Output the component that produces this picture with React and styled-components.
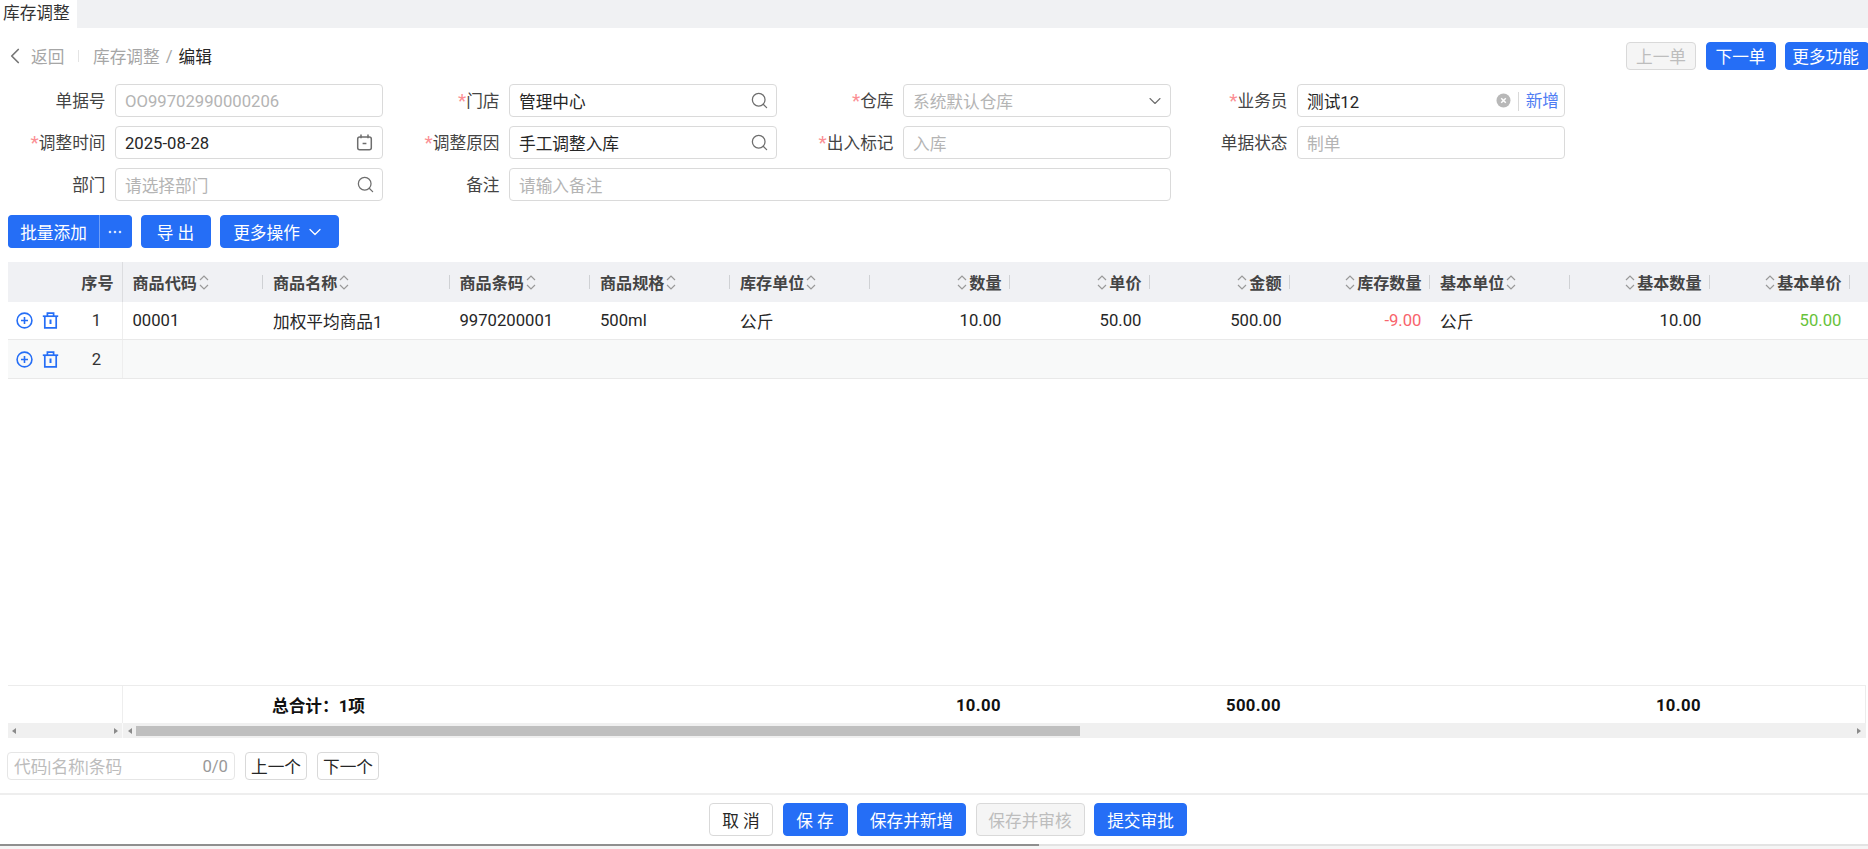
import React from 'react'
import styled, { createGlobalStyle } from 'styled-components'
import { ChevronLeft, ChevronDown, Search } from 'lucide-react'

const BLUE = '#256ef6'
const FONT_SIZE = '16.68px'
const COLS = '115px 140.5px 186.5px 140.5px repeat(9, 140px) 1fr'

const GlobalStyle = createGlobalStyle`
  html, body { margin: 0; padding: 0; background: #fff; }
  body {
    font-family: Roboto, "Noto Sans CJK SC", sans-serif;
    font-size: ${FONT_SIZE};
    color: #262626;
  }
  * { box-sizing: border-box; }
`

const Page = styled.div`
  height: 100vh;
  display: flex;
  flex-direction: column;
  overflow: hidden;
`

const TabBar = styled.div`
  height: 28px;
  flex: none;
  display: flex;
  background: #f0f1f3;
`

const Tab = styled.div`
  width: 77px;
  padding-left: 3px;
  background: #fff;
  line-height: 27px;
  color: #333;
`

const TopRow = styled.div`
  height: 28px;
  margin-top: 14px;
  padding-left: 12px;
  flex: none;
  display: flex;
  align-items: center;
`

const Back = styled.span`
  display: flex;
  align-items: center;
  width: 65.5px;
  color: #a6a6a6;
  svg { margin-left: -10px; margin-right: 3px; color: #777; }
`

const VLine = styled.span`
  width: 1px;
  height: 12px;
  background: #e4e4e4;
`

const Crumb = styled.span`
  margin-left: ${p => p.$first ? '14.5px' : '0'};
  color: ${p => p.$current ? '#262626' : '#a6a6a6'};
`

const Slash = styled.span`
  margin: 0 6px 0 6px;
  color: #a6a6a6;
`

const TopActions = styled.div`
  margin-left: auto;
  margin-right: -1px;
  display: flex;
  gap: 9.5px;
`

const Button = styled.button`
  height: ${p => p.$h || 33}px;
  width: ${p => p.$w ? p.$w + 'px' : 'auto'};
  padding: 0 ${p => p.$pr || 0}px 0 0;
  flex: none;
  border-radius: 4px;
  border: 1px solid ${p => p.$kind === 'primary' ? BLUE : '#d9d9d9'};
  background: ${p => p.$kind === 'primary' ? BLUE : p.$kind === 'disabled' ? '#f5f5f5' : '#fff'};
  color: ${p => p.$kind === 'primary' ? '#fff' : p.$kind === 'disabled' ? '#bdbdbd' : '#262626'};
  font: inherit;
  display: inline-flex;
  align-items: center;
  justify-content: center;
  gap: ${p => p.$gap || 8}px;
`

const Form = styled.div`
  margin-top: 14px;
  flex: none;
  display: grid;
  grid-template-columns: 383px 394px 394px 394px;
  grid-auto-rows: 33px;
  row-gap: 9px;
`

const Item = styled.div`
  display: flex;
  grid-column: span ${p => p.$span || 1};
`

const Label = styled.label`
  flex: 1;
  padding-right: 9.5px;
  text-align: right;
  line-height: 35px;
  color: #444;
  white-space: nowrap;
  i { font-style: normal; font-size: 19px; line-height: 0; color: #fb8f94; }
`

const Field = styled.div`
  flex: 0 0 ${p => p.$w || 268}px;
  height: 33px;
  padding: 0 9px;
  display: flex;
  align-items: center;
  background: #fff;
  border: 1px solid #dadada;
  border-radius: 4px;
  svg { flex: none; color: #6e6e6e; }
`

const Value = styled.span`
  flex: 1;
  padding-top: 1px;
  white-space: nowrap;
  color: ${p => p.$muted ? '#b4b4b4' : '#262626'};
`

const FieldIcon = styled.span`
  display: flex;
  margin-right: ${p => p.$shift || 0}px;
`

const AddLink = styled.span`
  margin-left: 7px;
  margin-top: 2px;
  padding-left: 7px;
  margin-right: -4px;
  border-left: 1px solid #d9d9d9;
  line-height: 19px;
  color: #4f7df3;
`

const Toolbar = styled.div`
  margin-top: 14px;
  padding-left: 7.5px;
  flex: none;
  display: flex;
  gap: 9px;
`

const Split = styled.div`
  display: flex;
  button:first-child { border-radius: 4px 0 0 4px; border-right-color: #6f9ff8; }
  button:last-child { border-radius: 0 4px 4px 0; border-left: none; }
`

const Table = styled.div`
  margin: 14px 0 0 7.5px;
  flex: 1;
  min-height: 0;
  display: flex;
  flex-direction: column;
`

const Row = styled.div`
  display: grid;
  grid-template-columns: ${COLS};
  height: ${p => p.$h}px;
  flex: none;
  background: ${p => p.$soft ? '#f8f9f9' : '#fff'};
  border-bottom: 1px solid #e9e9e9;
`

const HeadRow = styled(Row)`
  background: #f0f1f4;
  border-bottom: none;
`

const Head = styled.div`
  position: relative;
  padding: 0 ${p => p.$right ? '8.5px' : '0'} 0 ${p => p.$right ? '0' : '10px'};
  display: flex;
  align-items: center;
  justify-content: ${p => p.$right ? 'flex-end' : 'flex-start'};
  gap: 2px;
  font-size: 16.1px;
  font-weight: 600;
  color: #444;
  white-space: nowrap;
  &::after {
    content: '';
    position: absolute;
    right: 0;
    top: 13px;
    height: 14px;
    width: 1px;
    background: #cfd1d4;
  }
`

const SeqHead = styled.div`
  padding-right: 8px;
  display: flex;
  align-items: center;
  justify-content: flex-end;
  font-size: 16.1px;
  font-weight: 600;
  color: #444;
  border-right: 1px solid #dcdde0;
`

const SeqCell = styled.div`
  display: flex;
  align-items: center;
  padding-left: 8.5px;
  gap: 8.5px;
  border-right: 1px solid #eeeeee;
`

const SeqNo = styled.span`
  margin-left: 14.5px;
  width: 30px;
  text-align: center;
  color: #333;
`

const Cell = styled.div`
  padding: 0 ${p => p.$right ? '8.5px' : '0'} 0 ${p => p.$right ? '0' : '10px'};
  display: flex;
  align-items: center;
  justify-content: ${p => p.$right ? 'flex-end' : 'flex-start'};
  white-space: nowrap;
  color: ${p => p.$color || '#262626'};
`

const Body = styled.div`
  flex: 1;
  min-height: 0;
`

const FootRow = styled(Row)`
  height: 38px;
  margin-right: 2px;
  border-top: 1px solid #ececec;
  border-bottom: none;
  border-right: 1px solid #ececec;
`

const FootFix = styled.div`
  border-right: 1px solid #eeeeee;
`

const FootCell = styled.div`
  padding: 1px ${p => p.$right ? '9px' : '0'} 0 ${p => p.$right ? '0' : '9px'};
  display: flex;
  align-items: center;
  justify-content: ${p => p.$right ? 'flex-end' : 'flex-start'};
  font-weight: 700;
  letter-spacing: ${p => p.$right ? '0.4px' : '0'};
  color: #111;
  white-space: nowrap;
`

const ScrollBar = styled.div`
  height: 15px;
  margin-right: 2px;
  flex: none;
  display: flex;
  align-items: center;
  background: #f0f0f0;
`

const ScrollFix = styled.div`
  width: 115px;
  height: 100%;
  padding: 0 4px;
  flex: none;
  display: flex;
  align-items: center;
  justify-content: space-between;
  border-right: 1px solid #fafafa;
`

const Arrow = styled.span`
  width: 0;
  height: 0;
  border-top: 3.5px solid transparent;
  border-bottom: 3.5px solid transparent;
  border-${p => p.$dir === 'left' ? 'right' : 'left'}: 4px solid #8a8a8a;
`

const ScrollMain = styled.div`
  flex: 1;
  height: 100%;
  padding: 0 5px;
  display: flex;
  align-items: center;
`

const Thumb = styled.div`
  width: 944px;
  height: 10px;
  margin-left: 4px;
  margin-right: auto;
  background: #bfbfbf;
`

const FindRow = styled.div`
  margin-top: 14px;
  padding-left: 7px;
  flex: none;
  display: flex;
  gap: 10px;
`

const FindBox = styled.div`
  width: 228px;
  height: 28px;
  padding: 0 6px;
  display: flex;
  align-items: center;
  justify-content: space-between;
  border: 1px solid #e6e6e6;
  border-radius: 4px;
  color: #bcbcbc;
  b { font-weight: 400; color: #999; }
`

const ActionBar = styled.div`
  margin-top: 13px;
  padding: 8px 0 8px 28px;
  flex: none;
  display: flex;
  justify-content: center;
  gap: 9.5px;
  border-top: 2px solid #eeeeee;
`

const WindowBar = styled.div`
  height: 5px;
  flex: none;
  background: #f5f5f5;
  border-top: 2px solid #e3e3e3;
  position: relative;
`

const WindowThumb = styled.div`
  position: absolute;
  left: 0;
  top: -2px;
  width: 1039px;
  height: 2px;
  background: #8f8f8f;
`

const SortIcon = () => (
  <svg width="10" height="17" viewBox="0 0 10 17" fill="none" stroke="#999" strokeWidth="1.2" style={{ flex: 'none' }}>
    <path d="M1 6l4-4 4 4" />
    <path d="M1 11l4 4 4-4" />
  </svg>
)

const AddIcon = () => (
  <svg width="17" height="17" viewBox="0 0 17 17" fill="none" stroke={BLUE} strokeWidth="1.6">
    <circle cx="8.5" cy="8.5" r="7.4" />
    <path d="M8.5 5v7M5 8.5h7" />
  </svg>
)

const TrashIcon = () => (
  <svg width="17" height="17" viewBox="0 0 17 17" fill="none" stroke={BLUE} strokeWidth="1.7">
    <path d="M0.8 4.2h15.4" />
    <path d="M5.4 4V1.2h6.2V4" />
    <path d="M2.8 4.2v11.6h11.4V4.2" />
    <path d="M8.5 7.5v4.5" strokeWidth="2" />
  </svg>
)

const CalendarIcon = () => (
  <svg width="17" height="17" viewBox="0 0 17 17" fill="none" stroke="#6e6e6e" strokeWidth="1.5">
    <rect x="1.7" y="3" width="13.6" height="12.8" rx="2" />
    <path d="M5 0.6v3.6M12 0.6v3.6M6.6 9.4h3.8" />
  </svg>
)

const ClearIcon = () => (
  <svg width="15" height="15" viewBox="0 0 15 15">
    <circle cx="7.5" cy="7.5" r="7" fill="#b8b8b8" />
    <path d="M5.2 5.2l4.6 4.6M9.8 5.2l-4.6 4.6" stroke="#fff" strokeWidth="1.5" />
  </svg>
)

const columns = [
  { label: '商品代码' },
  { label: '商品名称' },
  { label: '商品条码' },
  { label: '商品规格' },
  { label: '库存单位' },
  { label: '数量', right: true },
  { label: '单价', right: true },
  { label: '金额', right: true },
  { label: '库存数量', right: true },
  { label: '基本单位' },
  { label: '基本数量', right: true },
  { label: '基本单价', right: true },
]

const firstRow = [
  { text: '00001' },
  { text: '加权平均商品1' },
  { text: '9970200001' },
  { text: '500ml' },
  { text: '公斤' },
  { text: '10.00', right: true },
  { text: '50.00', right: true },
  { text: '500.00', right: true },
  { text: '-9.00', right: true, color: '#f8646c' },
  { text: '公斤' },
  { text: '10.00', right: true },
  { text: '50.00', right: true, color: '#67c23a' },
]

const totals = ['', '总合计：1项', '', '', '', '10.00', '', '500.00', '', '', '10.00', '']

const Req = ({ children }) => <Label><i>*</i>{children}</Label>

const SearchIcon = () => (
  <FieldIcon $shift={-2}><Search size={19} strokeWidth={1.6} /></FieldIcon>
)

export default function App() {
  return (
    <Page>
      <GlobalStyle />
      <TabBar>
        <Tab>库存调整</Tab>
      </TabBar>

      <TopRow>
        <Back><ChevronLeft size={26} strokeWidth={1.6} />返回</Back>
        <VLine />
        <Crumb $first>库存调整</Crumb>
        <Slash>/</Slash>
        <Crumb $current>编辑</Crumb>
        <TopActions>
          <Button $h={28} $w={70} $kind="disabled">上一单</Button>
          <Button $h={28} $w={70} $kind="primary">下一单</Button>
          <Button $h={28} $w={84} $pr={3} $kind="primary">更多功能</Button>
        </TopActions>
      </TopRow>

      <Form>
        <Item>
          <Label>单据号</Label>
          <Field><Value $muted>OO99702990000206</Value></Field>
        </Item>
        <Item>
          <Req>门店</Req>
          <Field><Value>管理中心</Value><SearchIcon /></Field>
        </Item>
        <Item>
          <Req>仓库</Req>
          <Field><Value $muted>系统默认仓库</Value><FieldIcon $shift={-4}><ChevronDown size={20} strokeWidth={1.3} /></FieldIcon></Field>
        </Item>
        <Item>
          <Req>业务员</Req>
          <Field><Value>测试12</Value><ClearIcon /><AddLink>新增</AddLink></Field>
        </Item>

        <Item>
          <Req>调整时间</Req>
          <Field><Value>2025-08-28</Value><CalendarIcon /></Field>
        </Item>
        <Item>
          <Req>调整原因</Req>
          <Field><Value>手工调整入库</Value><SearchIcon /></Field>
        </Item>
        <Item>
          <Req>出入标记</Req>
          <Field><Value $muted>入库</Value></Field>
        </Item>
        <Item>
          <Label>单据状态</Label>
          <Field><Value $muted>制单</Value></Field>
        </Item>

        <Item>
          <Label>部门</Label>
          <Field><Value $muted>请选择部门</Value><SearchIcon /></Field>
        </Item>
        <Item $span={2}>
          <Label>备注</Label>
          <Field $w={662}><Value $muted>请输入备注</Value></Field>
        </Item>
      </Form>

      <Toolbar>
        <Split>
          <Button $w={92} $kind="primary">批量添加</Button>
          <Button $w={32} $kind="primary">
            <svg width="14" height="4" viewBox="0 0 14 4" fill="#d8e5fd">
              <circle cx="2" cy="2" r="1.3" /><circle cx="7" cy="2" r="1.3" /><circle cx="12" cy="2" r="1.3" />
            </svg>
          </Button>
        </Split>
        <Button $w={70} $kind="primary">导 出</Button>
        <Button $w={119} $gap={5} $kind="primary">更多操作<ChevronDown size={20} strokeWidth={1.5} /></Button>
      </Toolbar>

      <Table>
        <HeadRow $h={40}>
          <SeqHead>序号</SeqHead>
          {columns.map(c => (
            <Head key={c.label} $right={c.right}>
              {c.right && <SortIcon />}
              {c.label}
              {!c.right && <SortIcon />}
            </Head>
          ))}
          <div />
        </HeadRow>

        <Row $h={38}>
          <SeqCell><AddIcon /><TrashIcon /><SeqNo>1</SeqNo></SeqCell>
          {firstRow.map((c, i) => (
            <Cell key={i} $right={c.right} $color={c.color}>{c.text}</Cell>
          ))}
          <div />
        </Row>

        <Row $h={39} $soft>
          <SeqCell><AddIcon /><TrashIcon /><SeqNo>2</SeqNo></SeqCell>
        </Row>

        <Body />

        <FootRow>
          <FootFix />
          {totals.map((t, i) => (
            <FootCell key={i} $right={i !== 1}>{t}</FootCell>
          ))}
          <div />
        </FootRow>

        <ScrollBar>
          <ScrollFix><Arrow $dir="left" /><Arrow $dir="right" /></ScrollFix>
          <ScrollMain>
            <Arrow $dir="left" />
            <Thumb />
            <Arrow $dir="right" />
          </ScrollMain>
        </ScrollBar>
      </Table>

      <FindRow>
        <FindBox><span>代码|名称|条码</span><b>0/0</b></FindBox>
        <Button $h={28} $w={62}>上一个</Button>
        <Button $h={28} $w={62}>下一个</Button>
      </FindRow>

      <ActionBar>
        <Button $w={64}>取 消</Button>
        <Button $w={65} $kind="primary">保 存</Button>
        <Button $w={109} $kind="primary">保存并新增</Button>
        <Button $w={109} $kind="disabled">保存并审核</Button>
        <Button $w={93} $kind="primary">提交审批</Button>
      </ActionBar>

      <WindowBar><WindowThumb /></WindowBar>
    </Page>
  )
}
